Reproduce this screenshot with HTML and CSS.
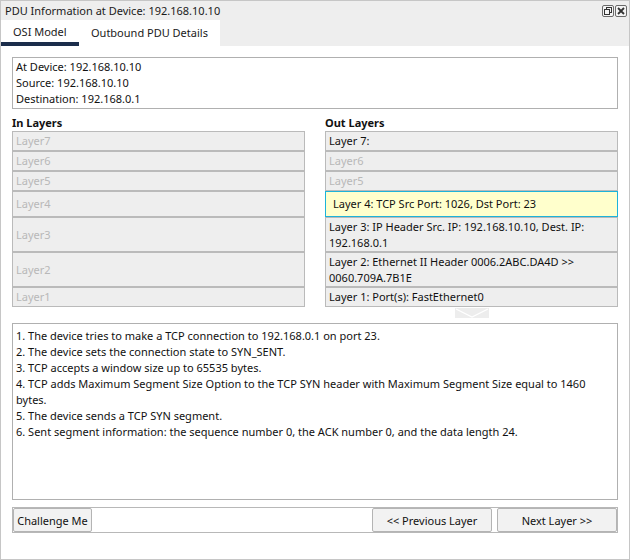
FILE: index.html
```html
<!DOCTYPE html>
<html>
<head>
<meta charset="utf-8">
<link rel="stylesheet" href="styles.css">
</head>
<body>
<div class="window">
  <div class="titlebar">
    <span class="title">PDU Information at Device: 192.168.10.10</span>
    <div class="wbtns">
      <svg class="wbtn" width="12" height="12" viewBox="0 0 12 12">
        <rect x="0.5" y="0.5" width="11" height="11" rx="1.5" fill="#f4f4f4" stroke="#6a6a6a"/>
        <rect x="4.5" y="2.5" width="5" height="5" fill="none" stroke="#333"/>
        <rect x="2.5" y="4.5" width="5" height="5" fill="#f4f4f4" stroke="#333"/>
      </svg>
      <svg class="wbtn" width="12" height="12" viewBox="0 0 12 12">
        <rect x="0.5" y="0.5" width="11" height="11" rx="1.5" fill="#f4f4f4" stroke="#6a6a6a"/>
        <path d="M3 3 L9 9 M9 3 L3 9" stroke="#333" stroke-width="1.8"/>
      </svg>
    </div>
  </div>
  <div class="tabbar">
    <div class="tabs">
      <div class="tab active">OSI Model</div>
      <div class="tab">Outbound PDU Details</div>
    </div>
  </div>
  <div class="content">
    <div class="info">
      <div>At Device: 192.168.10.10</div>
      <div>Source: 192.168.10.10</div>
      <div>Destination: 192.168.0.1</div>
    </div>
    <div class="columns">
      <div class="col">
        <div class="colhead">In Layers</div>
        <div class="layers">
          <div class="layer h20 dim">Layer7</div>
          <div class="layer h20 dim">Layer6</div>
          <div class="layer h20 dim">Layer5</div>
          <div class="layer h26 dim">Layer4</div>
          <div class="layer h35 dim">Layer3</div>
          <div class="layer h35 dim">Layer2</div>
          <div class="layer h20 dim">Layer1</div>
        </div>
      </div>
      <div class="col">
        <div class="colhead">Out Layers</div>
        <div class="layers">
          <div class="layer h20">Layer 7:</div>
          <div class="layer h20 dim">Layer6</div>
          <div class="layer h20 dim">Layer5</div>
          <div class="layer h26 sel">Layer 4: TCP Src Port: 1026, Dst Port: 23</div>
          <div class="layer h35">Layer 3: IP Header Src. IP: 192.168.10.10, Dest. IP: 192.168.0.1</div>
          <div class="layer h35">Layer 2: Ethernet II Header 0006.2ABC.DA4D &gt;&gt; 0060.709A.7B1E</div>
          <div class="layer h20">Layer 1: Port(s): FastEthernet0</div>
        </div>
        <div class="arrowrow">
          <svg class="downarrow" width="34" height="10" viewBox="0 0 34 10">
            <rect x="0" y="0" width="34" height="10" fill="#ededed"/>
            <path d="M1 1 L17 9 L33 1" fill="none" stroke="#ffffff" stroke-width="1.2"/>
          </svg>
        </div>
      </div>
    </div>
    <div class="desc">
      <div>1. The device tries to make a TCP connection to 192.168.0.1 on port 23.</div>
      <div>2. The device sets the connection state to SYN_SENT.</div>
      <div>3. TCP accepts a window size up to 65535 bytes.</div>
      <div>4. TCP adds Maximum Segment Size Option to the TCP SYN header with Maximum Segment Size equal to 1460 bytes.</div>
      <div>5. The device sends a TCP SYN segment.</div>
      <div>6. Sent segment information: the sequence number 0, the ACK number 0, and the data length 24.</div>
    </div>
    <div class="buttonbar">
      <button class="btn challenge">Challenge Me</button>
      <div class="spacer"></div>
      <button class="btn wide">&lt;&lt; Previous Layer</button>
      <button class="btn wide">Next Layer &gt;&gt;</button>
    </div>
  </div>
</div>
</body>
</html>
```
FILE: styles.css
```css
html, body {
  margin: 0;
  padding: 0;
  background: #ffffff;
}
body {
  font-family: "Noto Sans", "Open Sans", sans-serif;
  font-size: 11px;
  color: #111;
}
.window {
  width: 630px;
  height: 560px;
  box-sizing: border-box;
  border: 1px solid #c6c6c6;
  display: flex;
  flex-direction: column;
  background: #fff;
}
.titlebar {
  height: 19px;
  background: #eeeeee;
  display: flex;
  align-items: center;
  padding-left: 4px;
  padding-right: 2px;
}
.title {
  flex: 1;
  line-height: 19px;
  color: #1a1a1a;
}
.wbtns {
  display: flex;
  gap: 1px;
  padding-top: 1px;
}
.wbtn {
  display: block;
}
.tabbar {
  height: 26px;
  background: #eeeeee;
  display: flex;
}
.tabs {
  width: 219px;
  background: #ffffff;
  display: flex;
}
.tab {
  height: 26px;
  line-height: 25px;
  box-sizing: border-box;
  padding-left: 12px;
  color: #1a1a1a;
}
.tab.active {
  width: 78px;
  border-bottom: 4px solid #1b2d4b;
  line-height: 23px;
}
.content {
  flex: 1;
  padding: 11px 11px 0 11px;
  display: flex;
  flex-direction: column;
}
.info {
  height: 52px;
  box-sizing: border-box;
  border: 1px solid #b0b0b0;
  padding: 1px 3px;
  line-height: 16px;
  color: #111;
}
.columns {
  display: flex;
  gap: 20px;
  margin-top: 5px;
}
.col {
  flex: 1;
  display: flex;
  flex-direction: column;
}
.col:first-child {
  flex: 0 0 293px;
}
.colhead {
  font-weight: bold;
  line-height: 17px;
  color: #111;
}
.layers {
  display: flex;
  flex-direction: column;
}
.layer {
  box-sizing: border-box;
  background: #eeeeee;
  border: 1px solid #bababa;
  padding: 0 3px;
  display: flex;
  align-items: center;
  line-height: 16px;
  color: #111;
}
.layer.dim {
  color: #b8b8b8;
}
.h20 { height: 20px; }
.h26 { height: 26px; }
.h35 { height: 35px; }
.layer.sel {
  background: #ffffcc;
  border: 1px solid #1db3da;
  padding-left: 7px;
}
.arrowrow {
  display: flex;
  justify-content: center;
  padding-top: 1px;
  height: 16px;
  box-sizing: border-box;
}
.downarrow {
  display: block;
}
.desc {
  height: 177px;
  box-sizing: border-box;
  border: 1px solid #b0b0b0;
  padding: 4px 3px;
  line-height: 16px;
  color: #111;
}
.buttonbar {
  margin-top: 7px;
  height: 26px;
  box-sizing: border-box;
  border: 1px solid #b8b8b8;
  display: flex;
  align-items: stretch;
  gap: 5px;
  padding: 0;
}
.spacer {
  flex: 1;
}
.btn {
  font-family: "Noto Sans", "Open Sans", sans-serif;
  font-size: 11px;
  color: #111;
  background: #f2f2f2;
  border: 1px solid #b4b4b4;
  border-radius: 2px;
  padding: 0;
  margin: 0;
  white-space: nowrap;
}
.challenge {
  width: 79px;
}
.wide {
  width: 120px;
}
```
